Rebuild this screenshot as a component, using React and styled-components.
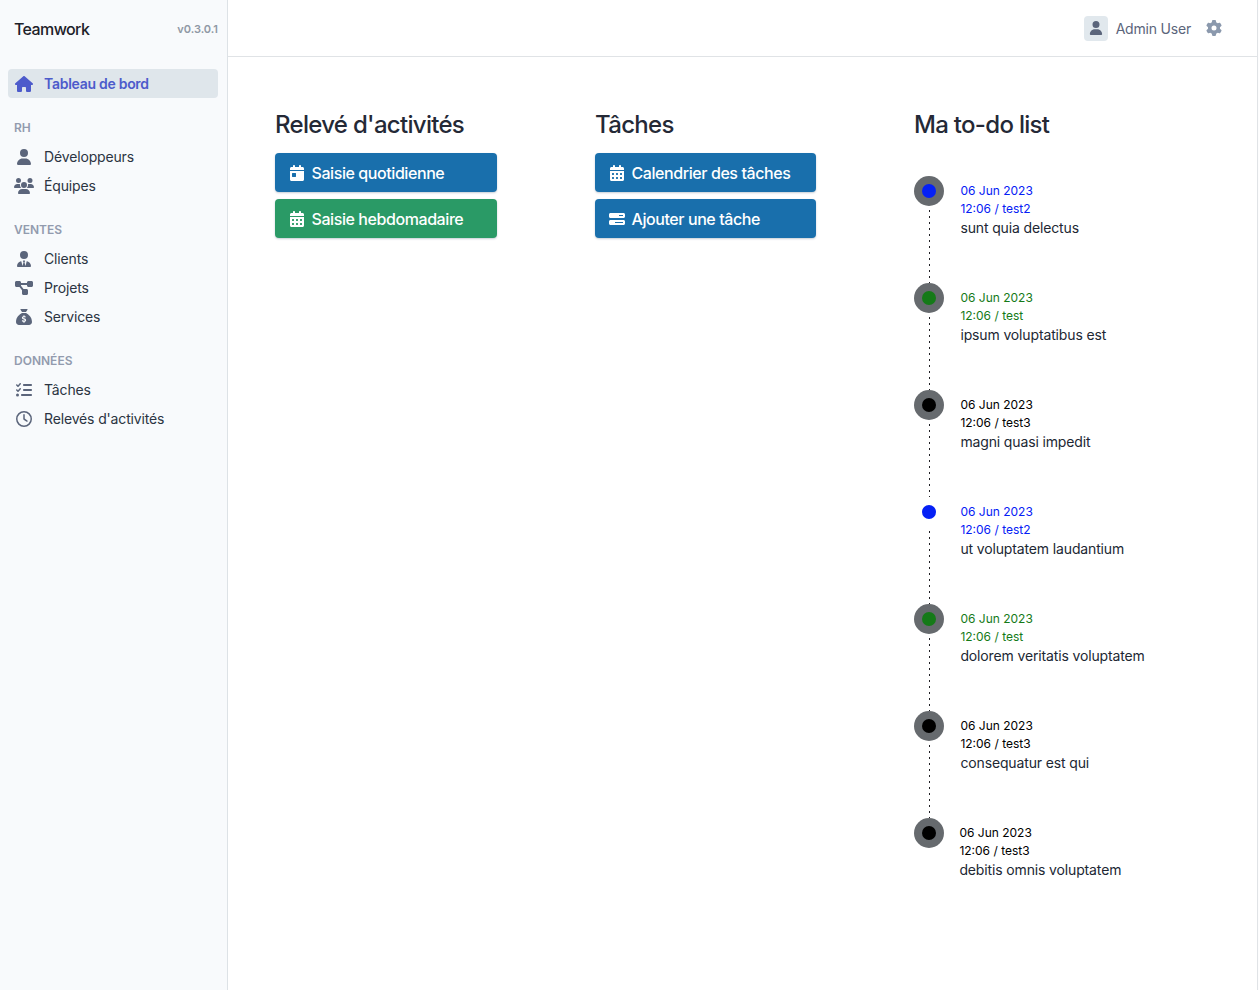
import React from "react";
import styled, { createGlobalStyle } from "styled-components";
import {
  FaHouse, FaUser, FaUsers, FaUserTie, FaDiagramProject, FaSackDollar, FaListCheck,
  FaRegClock, FaGear, FaCalendarDay, FaCalendarDays, FaBarsProgress,
} from "react-icons/fa6";

const GlobalStyle = createGlobalStyle`
  *, *::before, *::after { box-sizing: border-box; }
  body {
    margin: 0;
    background: #fdfdfe;
    color: #212733;
    font: 14px/21px Inter, "Liberation Sans", sans-serif;
    letter-spacing: -0.14px;
    -webkit-font-smoothing: antialiased;
  }
  ul { list-style: none; margin: 0; padding: 0; }
  h1, h2, p { margin: 0; }
`;

const Page = styled.div`
  display: flex;
  width: 1258px;
  height: 990px;
  overflow: hidden;
  background: #fff;
  border-right: 1px solid #e0e3e6;
`;

const Sidebar = styled.aside`
  flex: 0 0 228px;
  padding: 0 9px 0 8px;
  background: #f8fafc;
  border-right: 1px solid #dde2e6;
`;

const Brand = styled.header`
  display: flex;
  align-items: center;
  justify-content: space-between;
  height: 59px;
  padding-left: 6px;
  margin-bottom: 10px;
`;

const BrandName = styled.h1`
  margin-bottom: 1px;
  font-size: 16px;
  font-weight: 550;
  line-height: 24px;
  letter-spacing: -0.6px;
  color: #1d2129;
`;

const Version = styled.span`
  font-size: 11px;
  font-weight: 600;
  letter-spacing: 0;
  color: #8f98a5;
`;

const MenuItem = styled.li`
  display: flex;
  align-items: center;
  height: 29px;
  padding: 0 6px;
  border-radius: 4px;
  color: ${(p) => (p.$active ? "#4d5bcb" : "#2b3442")};
  background: ${(p) => (p.$active ? "#dfe6eb" : "transparent")};
  font-weight: ${(p) => (p.$active ? 600 : 400)};
  letter-spacing: ${(p) => (p.$active ? "-0.28px" : "-0.15px")};

  svg {
    width: 20px;
    height: 16px;
    margin-right: 10px;
    color: ${(p) => (p.$active ? "#4d5bcb" : "#5b657b")};
  }
`;

const MenuHeader = styled.li`
  padding: 19px 6px 4px;
  font-size: 12px;
  font-weight: 600;
  line-height: 21px;
  letter-spacing: 0;
  color: #929bae;
  text-transform: uppercase;
`;

const Main = styled.div`
  flex: 1;
  min-width: 0;
`;

const TopBar = styled.header`
  display: flex;
  align-items: center;
  justify-content: flex-end;
  height: 57px;
  padding-right: 35px;
  border-bottom: 1px solid #e0e3e6;
  color: #5b657b;
`;

const Avatar = styled.span`
  display: grid;
  place-items: center;
  width: 24px;
  height: 25px;
  margin-right: 8px;
  border-radius: 4px;
  background: #e1e8ed;
  svg { width: 14px; height: 14px; }
`;

const UserName = styled.span`
  margin-top: 1px;
  margin-right: 15px;
  letter-spacing: -0.2px;
`;

const Settings = styled(FaGear)`
  width: 16px;
  height: 16px;
  color: #8b99ad;
`;

const Columns = styled.main`
  display: grid;
  grid-template-columns: 222px 221px 260px;
  gap: 98px;
  padding: 53px 0 0 47px;
`;

const Heading = styled.h2`
  margin-bottom: 14px;
  font-size: 24px;
  font-weight: 500;
  line-height: 29px;
  letter-spacing: -0.7px;
  white-space: nowrap;
  color: #242936;
`;

const Action = styled.a`
  display: flex;
  align-items: center;
  height: 39px;
  margin-bottom: 7px;
  padding: 2px 0 0 14px;
  border-radius: 4px;
  background: ${(p) => (p.$green ? "#2a9a66" : "#196fac")};
  box-shadow: 0 1px 2px rgba(30, 60, 90, 0.25);
  color: #fff;
  font-size: 16px;
  font-weight: 500;
  letter-spacing: -0.42px;
  svg { width: 16px; height: 16px; margin: 0 6.5px 1px 0; }
`;

const Timeline = styled.ul`
  padding-top: 23px;
`;

const Entry = styled.li`
  display: flex;
  height: 107px;
`;

const Rail = styled.div`
  display: flex;
  flex-direction: column;
  align-items: center;
  width: 30px;
  margin-right: 16.4px;

  ${Entry}:last-child & { margin-right: 15.4px; }
`;

const Marker = styled.span`
  display: grid;
  place-items: center;
  flex: 0 0 30px;
  width: 30px;
  border-radius: 50%;
  background: ${(p) => (p.$plain ? "transparent" : "#666a6e")};

  &::before {
    content: "";
    width: 14px;
    height: 14px;
    border-radius: 50%;
    background: ${(p) => p.$color};
  }
`;

const Dots = styled.span`
  flex: 1;
  width: 1px;
  margin: 4px 0 0 1px;
  background: repeating-linear-gradient(#1f1f24 0 2px, transparent 2px 6px);
`;

const Details = styled.div`
  padding-top: 6px;
`;

const Meta = styled.p`
  font-size: 12px;
  line-height: 18px;
  letter-spacing: 0;
  color: ${(p) => p.$color};
`;

const Label = styled.p`
  line-height: 19px;
`;

const menu = [
  { header: "RH" },
  { icon: FaUser, text: "Développeurs" },
  { icon: FaUsers, text: "Équipes" },
  { header: "Ventes" },
  { icon: FaUserTie, text: "Clients" },
  { icon: FaDiagramProject, text: "Projets" },
  { icon: FaSackDollar, text: "Services" },
  { header: "Données" },
  { icon: FaListCheck, text: "Tâches" },
  { icon: FaRegClock, text: "Relevés d'activités" },
];

const BLUE = "#0520f5";
const GREEN = "#157a18";
const todos = [
  { color: BLUE, project: "test2", text: "sunt quia delectus" },
  { color: GREEN, project: "test", text: "ipsum voluptatibus est" },
  { color: "#000", project: "test3", text: "magni quasi impedit" },
  { color: BLUE, project: "test2", text: "ut voluptatem laudantium", plain: true },
  { color: GREEN, project: "test", text: "dolorem veritatis voluptatem" },
  { color: "#000", project: "test3", text: "consequatur est qui" },
  { color: "#000", project: "test3", text: "debitis omnis voluptatem" },
];

export default function App() {
  return (
    <Page>
      <GlobalStyle />
      <Sidebar>
        <Brand>
          <BrandName>Teamwork</BrandName>
          <Version>v0.3.0.1</Version>
        </Brand>
        <ul>
          <MenuItem $active><FaHouse />Tableau de bord</MenuItem>
          {menu.map(({ header, icon: Icon, text }) =>
            header ? (
              <MenuHeader key={header}>{header}</MenuHeader>
            ) : (
              <MenuItem key={text}><Icon />{text}</MenuItem>
            )
          )}
        </ul>
      </Sidebar>
      <Main>
        <TopBar>
          <Avatar><FaUser /></Avatar>
          <UserName>Admin User</UserName>
          <Settings />
        </TopBar>
        <Columns>
          <section>
            <Heading>Relevé d'activités</Heading>
            <Action><FaCalendarDay />Saisie quotidienne</Action>
            <Action $green><FaCalendarDays />Saisie hebdomadaire</Action>
          </section>
          <section>
            <Heading>Tâches</Heading>
            <Action><FaCalendarDays />Calendrier des tâches</Action>
            <Action><FaBarsProgress />Ajouter une tâche</Action>
          </section>
          <section>
            <Heading>Ma to-do list</Heading>
            <Timeline>
              {todos.map((t, i) => (
                <Entry key={t.text}>
                  <Rail>
                    <Marker $color={t.color} $plain={t.plain} />
                    {i < todos.length - 1 && <Dots />}
                  </Rail>
                  <Details>
                    <Meta $color={t.color}>06 Jun 2023</Meta>
                    <Meta $color={t.color}>12:06 / {t.project}</Meta>
                    <Label>{t.text}</Label>
                  </Details>
                </Entry>
              ))}
            </Timeline>
          </section>
        </Columns>
      </Main>
    </Page>
  );
}
